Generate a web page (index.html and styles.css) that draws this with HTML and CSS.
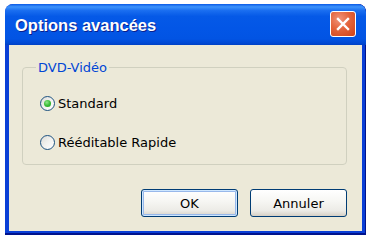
FILE: index.html
```html
<!DOCTYPE html>
<html lang="fr">
<head>
<meta charset="utf-8">
<title>Options avancées</title>
<link rel="stylesheet" href="styles.css">
</head>
<body>
<div class="window">
  <div class="titlebar">
    <span class="title">Options avancées</span>
    <button class="close" aria-label="Fermer">
      <svg width="16" height="16" viewBox="0 0 16 16"><path d="M3 3 L13 13 M13 3 L3 13" stroke="#fff" stroke-width="2.4" stroke-linecap="square" fill="none"/></svg>
    </button>
  </div>
  <div class="client">
    <fieldset class="group">
      <legend class="legend">DVD-Vidéo</legend>
      <label class="radio-row">
        <span class="radio checked"><span class="dot"></span></span>
        <span class="radio-text">Standard</span>
      </label>
      <label class="radio-row">
        <span class="radio"></span>
        <span class="radio-text">Rééditable Rapide</span>
      </label>
    </fieldset>
    <div class="buttons">
      <button class="btn default">OK</button>
      <button class="btn">Annuler</button>
    </div>
  </div>
</div>
</body>
</html>
```
FILE: styles.css
```css
html, body {
  margin: 0;
  padding: 0;
  background: #ffffff;
}
body {
  font-family: "DejaVu Sans", "Liberation Sans", sans-serif;
  font-size: 13px;
}
.window {
  margin: 4px 0 0 5px;
  width: 361px;
  height: 231px;
  display: flex;
  flex-direction: column;
  background: #0a3fd6;
  border-radius: 8px 8px 0 0;
  overflow: hidden;
  box-shadow: inset 0 -2px 0 #00138c, inset -1px 0 0 #00138c;
}
.titlebar {
  height: 41px;
  flex: none;
  display: flex;
  align-items: center;
  justify-content: space-between;
  padding: 0 10px 0 10px;
  background: linear-gradient(to bottom, #0a5ae6 0%, #3d93fb 7%, #1a6ef0 16%, #0559e7 30%, #0356e6 60%, #0254e3 85%, #0049d4 95%, #0041c4 100%);
  border-radius: 8px 8px 0 0;
}
.title {
  color: #ffffff;
  font-family: "Liberation Sans", sans-serif;
  font-weight: bold;
  font-size: 16.5px;
  text-shadow: 1px 1px 0 #0a1e8c;
  padding-top: 2px;
}
.close {
  width: 26px;
  height: 26px;
  padding: 0;
  margin-top: -1px;
  border: 1px solid #ffffff;
  border-radius: 3px;
  background: radial-gradient(circle at 35% 30%, #f0937a 0%, #e4643c 45%, #cf4118 100%);
  display: flex;
  align-items: center;
  justify-content: center;
}
.client {
  flex: 1;
  margin: 0 4px 4px 4px;
  background: #ece9d8;
  padding: 15px 15px 14px 13px;
  display: flex;
  flex-direction: column;
}
.group {
  margin: 0;
  padding: 18px 10px 12px 17px;
  border: 1px solid #d0d0bf;
  border-radius: 4px;
  display: flex;
  flex-direction: column;
  gap: 19px;
}
.legend {
  color: #0046d5;
  padding: 0 2px;
  margin-left: -4px;
  line-height: 15px;
}
.radio-row {
  display: flex;
  align-items: center;
  height: 20px;
  gap: 3px;
  color: #000000;
}
.radio {
  width: 13px;
  height: 13px;
  border: 1px solid #1c5180;
  border-radius: 50%;
  background: linear-gradient(135deg, #dcdcd7 0%, #f2f2ef 50%, #ffffff 100%);
  display: flex;
  align-items: center;
  justify-content: center;
}
.dot {
  width: 7px;
  height: 7px;
  border-radius: 50%;
  background: radial-gradient(circle at 40% 35%, #8fe58b 0%, #3bbd37 50%, #1c9c1c 100%);
}
.buttons {
  margin-top: auto;
  display: flex;
  justify-content: flex-end;
  gap: 12px;
}
.btn {
  width: 97px;
  height: 28px;
  font-family: "DejaVu Sans", "Liberation Sans", sans-serif;
  font-size: 13px;
  color: #000000;
  border: 1px solid #003c74;
  border-radius: 3px;
  background: linear-gradient(to bottom, #ffffff 0%, #f7f7f4 40%, #ecebe6 80%, #d6d0c5 100%);
  padding: 0;
}
.btn.default {
  box-shadow: inset 0 0 0 1px #cee7ff, inset 0 0 0 2px #98b8ea;
}
```
